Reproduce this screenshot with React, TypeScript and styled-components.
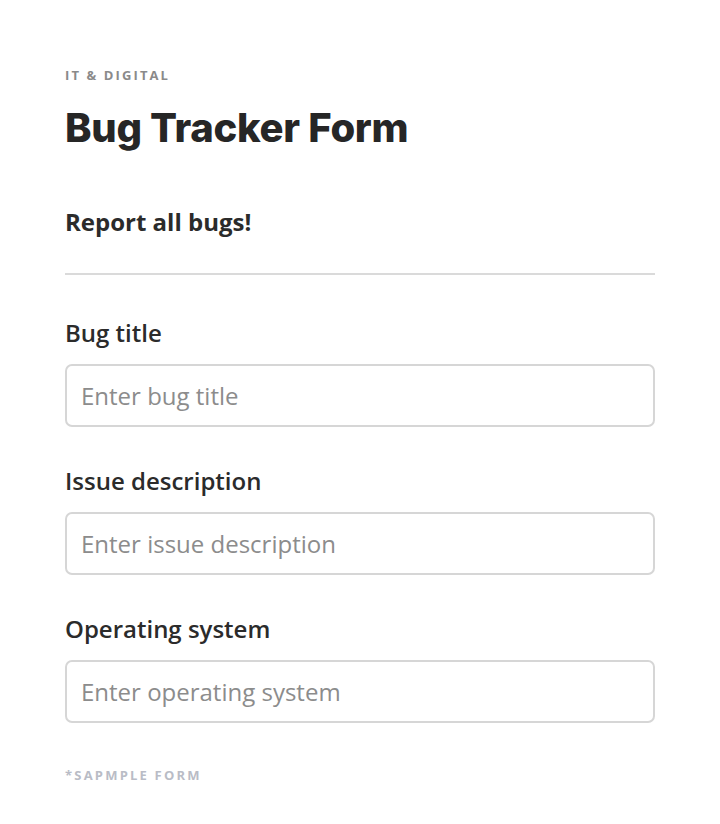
import styled, {createGlobalStyle} from 'styled-components';

const GlobalStyle = createGlobalStyle`
  * {
    box-sizing: border-box;
  }
  body {
    margin: 0;
    background: #fff;
    font-family: 'Open Sans', 'Liberation Sans', sans-serif;
    color: #2b2b2b;
  }
`;

const Page = styled.div`
  width: 720px;
  padding: 66px 65px 40px;
`;

const Eyebrow = styled.div`
  font-size: 13px;
  font-weight: 700;
  letter-spacing: 2.1px;
  color: #8a8a8a;
  line-height: 18px;
`;

const Title = styled.h1`
  margin: 22px 0 0;
  font-family: Inter, 'Liberation Sans', sans-serif;
  font-size: 40px;
  font-weight: 800;
  letter-spacing: -0.3px;
  line-height: 44px;
  color: #262626;
`;

const Subtitle = styled.div`
  margin-top: 56px;
  font-size: 24px;
  font-weight: 700;
  line-height: 32px;
  color: #2b2b2b;
`;

const Divider = styled.hr`
  margin: 35px 0 0;
  border: none;
  height: 2px;
  background: #dadada;
`;

const Fields = styled.div`
  display: flex;
  flex-direction: column;
  gap: 38px;
  margin-top: 42px;
`;

const Field = styled.label`
  display: flex;
  flex-direction: column;
  gap: 15px;
`;

const Label = styled.span`
  font-size: 24px;
  font-weight: 600;
  line-height: 32px;
  color: #2b2b2b;
`;

const Input = styled.input`
  height: 63px;
  width: 100%;
  padding: 0 14px;
  border: 2px solid #d6d6d6;
  border-radius: 7px;
  font-family: 'Open Sans', 'Liberation Sans', sans-serif;
  font-size: 24px;
  color: #2b2b2b;
  outline: none;
  &::placeholder {
    color: #8c8c8c;
  }
`;

const Footnote = styled.div`
  margin-top: 43px;
  font-size: 13px;
  font-weight: 700;
  letter-spacing: 2.2px;
  color: #b9bcc6;
`;

const fields = [
  {label: 'Bug title', placeholder: 'Enter bug title'},
  {label: 'Issue description', placeholder: 'Enter issue description'},
  {label: 'Operating system', placeholder: 'Enter operating system'},
];

function App() {
  return (
    <>
      <GlobalStyle />
      <Page>
        <Eyebrow>IT &amp; DIGITAL</Eyebrow>
        <Title>Bug Tracker Form</Title>
        <Subtitle>Report all bugs!</Subtitle>
        <Divider />
        <Fields>
          {fields.map((f) => (
            <Field key={f.label}>
              <Label>{f.label}</Label>
              <Input placeholder={f.placeholder} />
            </Field>
          ))}
        </Fields>
        <Footnote>*SAPMPLE FORM</Footnote>
      </Page>
    </>
  );
}

export default App;
